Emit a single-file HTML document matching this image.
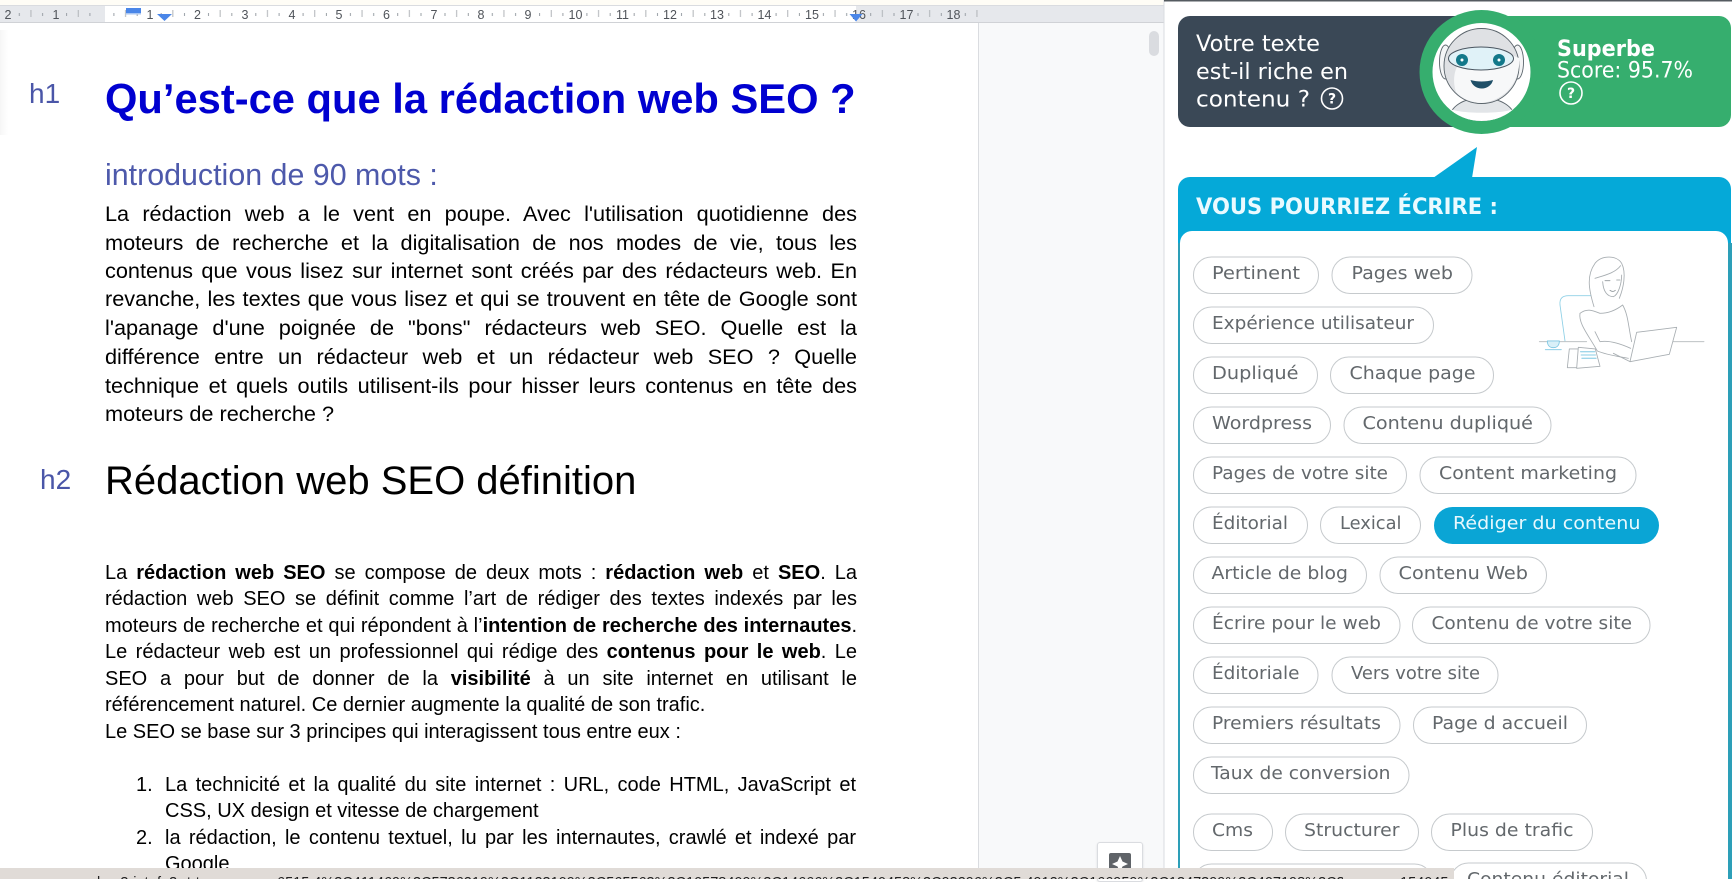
<!DOCTYPE html>
<html lang="fr">
<head>
<meta charset="utf-8">
<title>Rédaction web SEO</title>
<style>
html,body{margin:0;padding:0;background:#fff}
body{position:relative;width:1732px;height:879px;overflow:hidden;font-family:"Liberation Sans",Arial,sans-serif;color:#000}
.a{position:absolute}
.l{position:absolute;left:105px;width:752px;line-height:30px;height:30px;white-space:nowrap}
.j{white-space:normal;text-align:justify;text-align-last:justify}
.b1{font-size:21.7px}
.b2{font-size:20px}
.li{left:165px;width:691px}
b{font-weight:700}
#svg{position:absolute;left:0;top:0}
#status{position:absolute;left:0;top:868px;width:1454px;height:11px;background:#e0dbd7;overflow:hidden;font-size:14.5px;white-space:nowrap;color:#222}
#status span{position:absolute;top:7px;line-height:16px;height:16px;overflow:hidden}
#fab{position:absolute;left:1097px;top:842px;width:46px;height:40px;background:#fff;border:1px solid #dadce0;box-sizing:border-box;border-radius:3px;box-shadow:0 1px 2px rgba(60,64,67,.15)}
</style>
</head>
<body>
<div class="a" style="left:0;top:0;width:1164px;height:5px;background:#fffdf6"></div>
<div class="a" style="left:979px;top:22px;width:185px;height:857px;background:#f8f9fa"></div>
<div class="a" style="left:0;top:22px;width:979px;height:857px;background:#fff;border-right:1px solid #dadce0;box-sizing:border-box"></div>
<div class="a" style="left:0;top:30px;width:8px;height:105px;background:linear-gradient(90deg,#f6f6f6,#fff)"></div>
<div class="a" style="left:1149px;top:31px;width:10px;height:25px;background:#dadce0;border-radius:5px"></div>

<div class="l" style="left:29px;top:79px;font-size:28px;color:#4a56a8;width:40px">h1</div>
<div class="l" style="top:84px;font-size:41.7px;font-weight:700;color:#0000d0">Qu’est-ce que la rédaction web SEO ?</div>
<div class="l" style="top:160.4px;font-size:30.4px;color:#4d59ab">introduction de 90 mots :</div>

<div class="l b1 j" style="top:199px">La rédaction web a le vent en poupe. Avec l'utilisation quotidienne des</div>
<div class="l b1 j" style="top:227.6px">moteurs de recherche et la digitalisation de nos modes de vie, tous les</div>
<div class="l b1 j" style="top:256.1px">contenus que vous lisez sur internet sont créés par des rédacteurs web. En</div>
<div class="l b1 j" style="top:284.2px">revanche, les textes que vous lisez et qui se trouvent en tête de Google sont</div>
<div class="l b1 j" style="top:313.2px">l'apanage d'une poignée de "bons" rédacteurs web SEO. Quelle est la</div>
<div class="l b1 j" style="top:341.8px">différence entre un rédacteur web et un rédacteur web SEO ? Quelle</div>
<div class="l b1 j" style="top:370.5px">technique et quels outils utilisent-ils pour hisser leurs contenus en tête des</div>
<div class="l b1" style="top:398.8px">moteurs de recherche ?</div>

<div class="l" style="left:40px;top:464.6px;font-size:28px;color:#4a56a8;width:40px">h2</div>
<div class="l" style="top:466.2px;font-size:40px">Rédaction web SEO définition</div>

<div class="l b2 j" style="top:558px">La <b>rédaction web SEO</b> se compose de deux mots : <b>rédaction web</b> et <b>SEO</b>. La</div>
<div class="l b2 j" style="top:584.3px">rédaction web SEO se définit comme l’art de rédiger des textes indexés par les</div>
<div class="l b2 j" style="top:611px">moteurs de recherche et qui répondent à l’<b>intention de recherche des internautes</b>.</div>
<div class="l b2 j" style="top:637.3px">Le rédacteur web est un professionnel qui rédige des <b>contenus pour le web</b>. Le</div>
<div class="l b2 j" style="top:664px">SEO a pour but de donner de la <b>visibilité</b> à un site internet en utilisant le</div>
<div class="l b2" style="top:690.3px">référencement naturel. Ce dernier augmente la qualité de son trafic.</div>
<div class="l b2" style="top:717px">Le SEO se base sur 3 principes qui interagissent tous entre eux :</div>

<div class="l b2" style="left:136px;width:28px;top:770.1px">1.</div>
<div class="l b2 j li" style="top:770.1px">La technicité et la qualité du site internet : URL, code HTML, JavaScript et</div>
<div class="l b2 li" style="top:796.4px">CSS, UX design et vitesse de chargement</div>
<div class="l b2" style="left:136px;width:28px;top:822.8px">2.</div>
<div class="l b2 j li" style="top:822.8px">la rédaction, le contenu textuel, lu par les internautes, crawlé et indexé par</div>
<div class="l b2 li" style="top:849.2px">Google</div>

<svg id="svg" width="1732" height="879" viewBox="0 0 1732 879" xmlns="http://www.w3.org/2000/svg">
<defs>
<pattern id="tk" x="7.3" y="5" width="47.3" height="17" patternUnits="userSpaceOnUse">
<path d="M12 8v3M35.3 8v3" stroke="#9aa0a6" stroke-width="1" fill="none"/>
<path d="M23.65 5v7" stroke="#b0b4b8" stroke-width="1" fill="none"/>
</pattern>
<clipPath id="cc"><circle cx="1481.5" cy="72" r="49"/></clipPath>
</defs>

<!-- ruler -->
<rect x="0" y="5" width="1164" height="17.5" fill="#e6e8ec"/>
<rect x="105" y="5" width="751" height="17.5" fill="#fff"/>
<rect x="0" y="5" width="1164" height="1" fill="#dadce0"/>
<rect x="0" y="22" width="1164" height="1" fill="#d0d2d6"/>
<rect x="0" y="5" width="979" height="17" fill="url(#tk)"/>
<g font-family="Liberation Sans, sans-serif" font-size="12.5" fill="#50545a" text-anchor="middle">
<text x="8" y="19">2</text><text x="56" y="19">1</text><text x="150" y="19">1</text><text x="197.500" y="19">2</text><text x="245" y="19">3</text><text x="292" y="19">4</text><text x="339" y="19">5</text><text x="386.500" y="19">6</text><text x="434" y="19">7</text><text x="481" y="19">8</text><text x="528" y="19">9</text><text x="575.500" y="19">10</text><text x="622.500" y="19">11</text><text x="670" y="19">12</text><text x="717" y="19">13</text><text x="764.500" y="19">14</text><text x="812" y="19">15</text><text x="859" y="19">16</text><text x="906.500" y="19">17</text><text x="953.500" y="19">18</text>
</g>
<rect x="126" y="8" width="15" height="5" fill="#4a86e8"/><rect x="126" y="13" width="15" height="1.500" fill="#a9c6f2"/>
<path d="M157 14h15l-7.500 7z" fill="#4a86e8"/>
<path d="M849.500 14h13l-6.500 7.500z" fill="#4a86e8"/>

<!-- divider / right panel base -->
<rect x="1164" y="0" width="568" height="879" fill="#fff"/>
<rect x="1163.500" y="0" width="1" height="879" fill="#dadce0"/>
<rect x="1164" y="0" width="568" height="1.500" fill="#555b60"/>

<!-- score banner -->
<path d="M1190 16H1500V127H1190a12 12 0 0 1-12-12V28a12 12 0 0 1 12-12z" fill="#3a4856"/>
<path d="M1481 16H1719a12 12 0 0 1 12 12V115a12 12 0 0 1-12 12H1481z" fill="#36ae6e"/>
<circle cx="1481.500" cy="72" r="62" fill="#36ae6e"/>
<circle cx="1481.500" cy="72" r="49" fill="#fff"/>
<g clip-path="url(#cc)">
<path d="M1449 121C1449 106 1464 98 1482 98C1500 98 1515 106 1516 121z" fill="#e2e5e8" stroke="#5a646b" stroke-width=".9"/>
<path d="M1450 109C1462 114 1502 114 1514 109L1522 124H1442z" fill="#fff"/>
<ellipse cx="1445.500" cy="62" rx="6" ry="17" fill="#f4f5f6" stroke="#5a646b" stroke-width=".9"/>
<ellipse cx="1517.500" cy="62" rx="6" ry="17" fill="#f4f5f6" stroke="#5a646b" stroke-width=".9"/>
<circle cx="1481.500" cy="66" r="37.500" fill="#dfe1e4" stroke="#5a646b" stroke-width=".9"/>
<path d="M1456 92C1447 64 1470 36 1519 58C1521 78 1508 100 1482 103C1472 103 1462 99 1456 92z" fill="#f7f8f9"/>
<ellipse cx="1481" cy="58.500" rx="32.500" ry="11.500" fill="#e0f2f8" stroke="#4a5560" stroke-width="1"/>
<circle cx="1462" cy="60" r="6" fill="#12788a"/><circle cx="1462" cy="60" r="1.500" fill="#fff"/>
<circle cx="1499" cy="60" r="6" fill="#12788a"/><circle cx="1499" cy="60" r="1.500" fill="#fff"/>
<path d="M1470.500 80C1477 82 1486 82 1493 80C1492 85 1487 88.500 1482 88.500C1476 88.500 1472 85 1470.500 80z" fill="#1f4f68"/>
</g>
<g font-family="DejaVu Sans, sans-serif" fill="#fff">
<text x="1196" y="51" font-size="22" textLength="124" lengthAdjust="spacingAndGlyphs">Votre texte</text>
<text x="1196" y="79" font-size="22" textLength="152" lengthAdjust="spacingAndGlyphs">est-il riche en</text>
<text x="1196" y="106.500" font-size="22" textLength="114" lengthAdjust="spacingAndGlyphs">contenu ?</text>
<text x="1557" y="56" font-size="22" font-weight="700" textLength="98" lengthAdjust="spacingAndGlyphs">Superbe</text>
<text x="1557" y="77.500" font-size="22" textLength="136" lengthAdjust="spacingAndGlyphs">Score: 95.7%</text>
</g>
<g fill="none" stroke="#fff" stroke-width="1.600"><circle cx="1332" cy="98.500" r="10.500"/><circle cx="1571" cy="93" r="11"/></g>
<g font-family="DejaVu Sans, sans-serif" fill="#fff" font-size="14" font-weight="700" text-anchor="middle"><text x="1332" y="103.500">?</text><text x="1571" y="98">?</text></g>

<!-- blue panel -->
<path d="M1433 178L1477 147L1472 178z" fill="#05a9d8"/>
<path d="M1190 177H1719a12 12 0 0 1 12 12V879H1178V189a12 12 0 0 1 12-12z" fill="#05a9d8"/>
<path d="M1192 231H1716a12 12 0 0 1 12 12V879H1180V243a12 12 0 0 1 12-12z" fill="#fff"/>
<rect x="1178" y="243" width="2" height="636" fill="#2d9fb8"/>
<rect x="1728" y="243" width="4" height="636" fill="#2d9fb8"/>
<text x="1196" y="214" font-family="DejaVu Sans, sans-serif" font-size="22" font-weight="700" fill="#eafaff" textLength="302" lengthAdjust="spacingAndGlyphs">VOUS POURRIEZ ÉCRIRE :</text>

<!-- illustration -->
<g transform="translate(1520 245) scale(.3333)" fill="none" stroke-width="2.600" stroke-linecap="round" stroke-linejoin="round">
<path d="M135 288L120 180C118 160 128 152 145 152H215" stroke="#8fd0e6"/>
<path d="M58 290H200M460 290H552" stroke="#b4b9bc"/>
<path d="M82 288H118C118 304 108 308 100 308C90 308 82 302 82 288zM76 314H124" stroke="#7cc6e2" fill="#d9f0f8"/>
<path d="M148 312H175V368H142z" stroke="#a8aeb2" fill="#fff"/>
<path d="M175 307L226 312L240 364L170 370z" stroke="#a8aeb2" fill="#fff"/>
<path d="M182 320H224M184 330H226M186 340H228" stroke="#9fd6ea" stroke-width="4"/>
<path d="M222 185C205 130 200 90 225 55C245 30 290 30 305 55C320 85 310 130 298 160" stroke="#a8aeb2" fill="#fff"/>
<path d="M225 100C250 92 285 85 302 62M248 110C250 140 262 155 280 155C295 150 305 115 305 90" stroke="#a8aeb2"/>
<path d="M255 107H270M290 105H300M270 136C276 140 282 140 286 136" stroke="#8f969a"/>
<path d="M180 205C200 190 215 195 240 205C270 205 295 190 308 180C325 210 325 245 335 290" stroke="#a8aeb2" fill="#fff"/>
<path d="M180 205C175 235 205 270 232 318C260 330 300 335 325 340M225 260L240 290C270 285 310 300 332 310" stroke="#a8aeb2"/>
<path d="M350 262L470 247L448 328L330 350z" stroke="#a8aeb2" fill="#fff"/>
<path d="M280 325L330 350" stroke="#a8aeb2"/>
</g>

<!-- chips -->
<g fill="#fff" stroke="#c6cacd" stroke-width="1">
<rect x="1193.500" y="257" width="125" height="36.500" rx="18"/><rect x="1332" y="257" width="140" height="36.500" rx="18"/>
<rect x="1193.500" y="307" width="240" height="36.500" rx="18"/>
<rect x="1193.500" y="357" width="124" height="36.500" rx="18"/><rect x="1330.500" y="357" width="163" height="36.500" rx="18"/>
<rect x="1193.500" y="407" width="137" height="36.500" rx="18"/><rect x="1344" y="407" width="207" height="36.500" rx="18"/>
<rect x="1193.500" y="457" width="213" height="36.500" rx="18"/><rect x="1420" y="457" width="216" height="36.500" rx="18"/>
<rect x="1193.500" y="507" width="114" height="36.500" rx="18"/><rect x="1320.500" y="507" width="100" height="36.500" rx="18"/>
<rect x="1193.500" y="557" width="173" height="36.500" rx="18"/><rect x="1380" y="557" width="166.500" height="36.500" rx="18"/>
<rect x="1193.500" y="607" width="206.500" height="36.500" rx="18"/><rect x="1412.500" y="607" width="237.500" height="36.500" rx="18"/>
<rect x="1193.500" y="657" width="124.500" height="36.500" rx="18"/><rect x="1332" y="657" width="166" height="36.500" rx="18"/>
<rect x="1193.500" y="707" width="206.500" height="36.500" rx="18"/><rect x="1413.500" y="707" width="173" height="36.500" rx="18"/>
<rect x="1193.500" y="757" width="215.500" height="36.500" rx="18"/>
<rect x="1193.500" y="814" width="79" height="36.500" rx="18"/><rect x="1285.500" y="814" width="133" height="36.500" rx="18"/><rect x="1431.500" y="814" width="161" height="36.500" rx="18"/>
<rect x="1193.500" y="864" width="239" height="36.500" rx="18"/><rect x="1450.500" y="863" width="196" height="36.500" rx="18"/>
</g>
<rect x="1434" y="507" width="225" height="37" rx="18.500" fill="#0aa5d5"/>
<g transform="translate(0 -1)" font-family="DejaVu Sans, sans-serif" font-size="17.500" fill="#63686c">
<text x="1212" y="280" textLength="88" lengthAdjust="spacingAndGlyphs">Pertinent</text>
<text x="1351.500" y="280" textLength="101.500" lengthAdjust="spacingAndGlyphs">Pages web</text>
<text x="1212" y="330" textLength="202" lengthAdjust="spacingAndGlyphs">Expérience utilisateur</text>
<text x="1212" y="380" textLength="86.500" lengthAdjust="spacingAndGlyphs">Dupliqué</text>
<text x="1349.500" y="380" textLength="126" lengthAdjust="spacingAndGlyphs">Chaque page</text>
<text x="1212" y="430" textLength="100" lengthAdjust="spacingAndGlyphs">Wordpress</text>
<text x="1362.500" y="430" textLength="170.500" lengthAdjust="spacingAndGlyphs">Contenu dupliqué</text>
<text x="1212" y="480" textLength="176" lengthAdjust="spacingAndGlyphs">Pages de votre site</text>
<text x="1439" y="480" textLength="178" lengthAdjust="spacingAndGlyphs">Content marketing</text>
<text x="1212" y="530" textLength="76" lengthAdjust="spacingAndGlyphs">Éditorial</text>
<text x="1340" y="530" textLength="61.500" lengthAdjust="spacingAndGlyphs">Lexical</text>
<text x="1453" y="530" fill="#e8f8fd" textLength="187.500" lengthAdjust="spacingAndGlyphs">Rédiger du contenu</text>
<text x="1211.500" y="580" textLength="136.500" lengthAdjust="spacingAndGlyphs">Article de blog</text>
<text x="1398.500" y="580" textLength="129.500" lengthAdjust="spacingAndGlyphs">Contenu Web</text>
<text x="1212" y="630" textLength="169" lengthAdjust="spacingAndGlyphs">Écrire pour le web</text>
<text x="1431.500" y="630" textLength="200.500" lengthAdjust="spacingAndGlyphs">Contenu de votre site</text>
<text x="1212" y="680" textLength="87.500" lengthAdjust="spacingAndGlyphs">Éditoriale</text>
<text x="1351" y="680" textLength="129" lengthAdjust="spacingAndGlyphs">Vers votre site</text>
<text x="1212" y="730" textLength="169" lengthAdjust="spacingAndGlyphs">Premiers résultats</text>
<text x="1432" y="730" textLength="136" lengthAdjust="spacingAndGlyphs">Page d accueil</text>
<text x="1211" y="780" textLength="179.500" lengthAdjust="spacingAndGlyphs">Taux de conversion</text>
<text x="1212" y="837" textLength="41" lengthAdjust="spacingAndGlyphs">Cms</text>
<text x="1304" y="837" textLength="95.500" lengthAdjust="spacingAndGlyphs">Structurer</text>
<text x="1450.500" y="837" textLength="123" lengthAdjust="spacingAndGlyphs">Plus de trafic</text>
<text x="1467" y="886" textLength="162" lengthAdjust="spacingAndGlyphs">Contenu éditorial</text>
</g>
</svg>

<div id="fab">
<svg width="46" height="40" style="position:absolute;left:-1px;top:-1px" xmlns="http://www.w3.org/2000/svg">
<rect x="12" y="11" width="22" height="22" rx="2" fill="#5f6368"/>
<path d="M23 14L25.500 19.500L31 22L25.500 24.500L23 30L20.500 24.500L15 22L20.500 19.500z" fill="#fff"/>
</svg>
</div>
<div id="status"><span style="left:97px">l e&#160;&#160;3-int=f&#160;&#160;3-rt-t-</span><span style="left:277px;width:1066px">6515 4%3C411469%3C5736219%3C1123109%3C565563%3C10578409%3C14666%3C1540458%3C93296%3C5 4912%3C166959%3C1347399%3C407198%3C38970%3C38170</span><span style="left:1400px">154045</span></div>
</body>
</html>
